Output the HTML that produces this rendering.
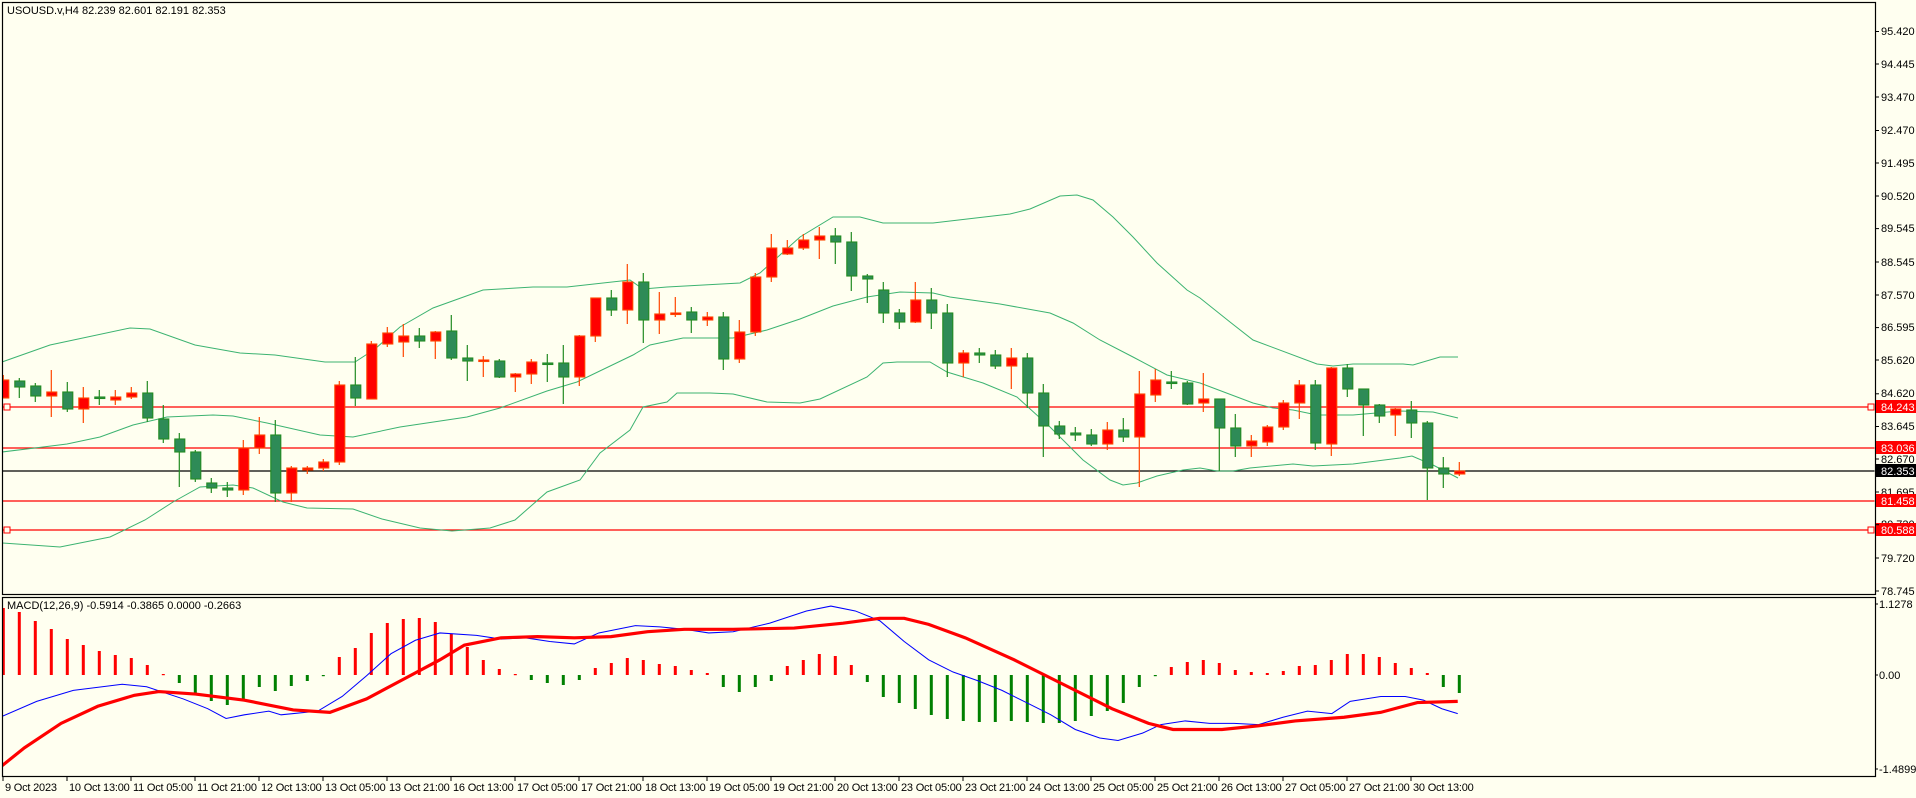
<!DOCTYPE html>
<html><head><meta charset="utf-8"><style>
html,body{margin:0;padding:0;background:#fffff0;width:1916px;height:798px;overflow:hidden}
svg{position:absolute;left:0;top:0}
text{font-family:"Liberation Sans",sans-serif;font-size:11px;fill:#000}
</style></head><body>
<svg id="s" width="1916" height="798" viewBox="0 0 1916 798" xmlns="http://www.w3.org/2000/svg">
<defs>
<clipPath id="cm"><rect x="2.5" y="2.5" width="1872" height="591"/></clipPath>
<clipPath id="cd"><rect x="2.5" y="597.5" width="1872" height="178"/></clipPath>
</defs>
<rect x="0" y="0" width="1916" height="798" fill="#fffff0"/>
<g id="main" clip-path="url(#cm)">
<line x1="2" y1="407" x2="1875" y2="407" stroke="#ff0000" stroke-width="1.3"/>
<line x1="2" y1="448" x2="1875" y2="448" stroke="#ff0000" stroke-width="1.3"/>
<line x1="2" y1="471" x2="1875" y2="471" stroke="#000" stroke-width="1.3"/>
<line x1="2" y1="501" x2="1875" y2="501" stroke="#ff0000" stroke-width="1.3"/>
<line x1="2" y1="530" x2="1875" y2="530" stroke="#ff0000" stroke-width="1.3"/>
<polyline fill="none" stroke="#3cb371" stroke-width="1" points="2,362 50,345 130,328 150,329 195,345 240,353 275,355 325,362 355,362 375,349 400,327 433,308 483,290 533,287 567,287 630,280 643,289 667,287 740,283 760,273 800,237 833,217 860,217 883,223 933,223 1010,214 1030,209 1060,196 1077,195 1093,200 1113,217 1133,237 1157,263 1187,290 1200,298 1230,322 1253,340 1317,364 1333,366 1353,364 1403,364 1413,365 1440,357 1458,357"/>
<polyline fill="none" stroke="#3cb371" stroke-width="1" points="2,452 43,447 67,444 100,437 133,425 167,417 213,415 233,416 267,423 320,435 353,437 400,427 467,417 500,408 547,391 577,382 633,355 650,345 683,338 733,338 767,330 800,319 833,306 867,297 900,292 933,293 950,297 1000,304 1050,313 1073,323 1100,340 1133,357 1167,375 1200,383 1253,403 1273,408 1293,410 1317,415 1353,415 1400,411 1433,412 1458,418"/>
<polyline fill="none" stroke="#3cb371" stroke-width="1" points="2,543 60,547 110,537 145,520 173,502 200,487 233,485 253,488 283,502 307,508 353,509 382,519 420,528 452,531 490,528 515,520 547,492 580,480 600,453 630,430 643,407 667,402 677,393 710,393 733,394 767,402 800,403 820,399 867,377 883,363 897,362 930,362 947,372 983,383 1017,397 1050,427 1083,460 1110,480 1123,485 1137,483 1157,476 1183,470 1200,468 1217,471 1233,471 1250,468 1293,464 1313,466 1353,464 1400,458 1412,456 1433,465 1458,478"/>
<g id="candles"></g>
</g>
<rect x="4" y="404" width="6" height="6" fill="#fffff0" stroke="#ff0000"/>
<rect x="4" y="527" width="6" height="6" fill="#fffff0" stroke="#ff0000"/>
<rect x="1868" y="404" width="6" height="6" fill="#fffff0" stroke="#ff0000"/>
<rect x="1868" y="527" width="6" height="6" fill="#fffff0" stroke="#ff0000"/>
<g id="macd" clip-path="url(#cd)">
<g id="hist"></g>
<g transform="scale(1.2219)">
<polyline fill="none" stroke="#0000ff" stroke-width="0.85" points="0,587 30,574 60,565 100,560 120,562 150,572 170,580 185,588 200,585 220,582 230,585 260,582 280,570 300,553 320,535 340,524 360,518 390,520 410,523 430,522 450,525 470,527 490,518 520,512 540,513 560,515 580,518 600,517 630,510 660,500 680,496 700,500 720,508 740,525 760,540 780,550 800,557 820,565 840,575 860,585 880,597 900,604 915,606 935,600 950,593 970,590 990,592 1010,592 1030,593 1050,587 1070,582 1090,584 1105,574 1130,570 1150,570 1165,573 1180,580 1193,584"/>
<polyline fill="none" stroke="#ff0000" stroke-width="2.6" points="0,628 20,612 50,592 80,578 110,569 130,566 160,568 200,573 240,581 270,583 300,572 330,556 360,540 380,528 410,522 440,521 470,522 500,521 530,517 560,515 600,515 650,514 690,510 720,506 740,506 760,511 790,522 830,540 870,560 910,580 940,592 960,597 1000,597 1030,594 1060,590 1100,587 1130,583 1160,575 1193,574"/>
</g>
</g>
<rect x="2.5" y="2.5" width="1873" height="592" fill="none" stroke="#000" stroke-width="1.2"/>
<rect x="2.5" y="597.5" width="1873" height="179" fill="none" stroke="#000" stroke-width="1.2"/>
<text x="7" y="14">USOUSD.v,H4  82.239 82.601 82.191 82.353</text>
<text x="7" y="609">MACD(12,26,9) -0.5914 -0.3865 0.0000 -0.2663</text>
<g id="ax">
<text x="1881" y="35">95.420</text>
<text x="1881" y="68">94.445</text>
<text x="1881" y="101">93.470</text>
<text x="1881" y="134">92.470</text>
<text x="1881" y="167">91.495</text>
<text x="1881" y="200">90.520</text>
<text x="1881" y="232">89.545</text>
<text x="1881" y="266">88.545</text>
<text x="1881" y="299">87.570</text>
<text x="1881" y="331">86.595</text>
<text x="1881" y="364">85.620</text>
<text x="1881" y="397">84.620</text>
<text x="1881" y="430">83.645</text>
<text x="1881" y="463">82.670</text>
<text x="1881" y="496">81.695</text>
<text x="1881" y="528">80.720</text>
<text x="1881" y="562">79.720</text>
<text x="1881" y="595">78.745</text>
</g>
<rect x="1876" y="400" width="40" height="13" fill="#ff0000"/><text x="1881" y="411" style="fill:#fff">84.243</text>
<rect x="1876" y="441" width="40" height="13" fill="#ff0000"/><text x="1881" y="452" style="fill:#fff">83.036</text>
<rect x="1876" y="464" width="40" height="13" fill="#000"/><text x="1881" y="475" style="fill:#fff">82.353</text>
<rect x="1876" y="494" width="40" height="13" fill="#ff0000"/><text x="1881" y="505" style="fill:#fff">81.458</text>
<rect x="1876" y="523" width="40" height="13" fill="#ff0000"/><text x="1881" y="534" style="fill:#fff">80.588</text>
<text x="1879" y="608">1.1278</text>
<text x="1879" y="679">0.00</text>
<text x="1879" y="773">-1.4899</text>
<g id="dates" style="font-size:11px;letter-spacing:-0.2px">
<text x="5" y="791">9 Oct 2023</text>
<text x="69" y="791">10 Oct 13:00</text>
<text x="133" y="791">11 Oct 05:00</text>
<text x="197" y="791">11 Oct 21:00</text>
<text x="261" y="791">12 Oct 13:00</text>
<text x="325" y="791">13 Oct 05:00</text>
<text x="389" y="791">13 Oct 21:00</text>
<text x="453" y="791">16 Oct 13:00</text>
<text x="517" y="791">17 Oct 05:00</text>
<text x="581" y="791">17 Oct 21:00</text>
<text x="645" y="791">18 Oct 13:00</text>
<text x="709" y="791">19 Oct 05:00</text>
<text x="773" y="791">19 Oct 21:00</text>
<text x="837" y="791">20 Oct 13:00</text>
<text x="901" y="791">23 Oct 05:00</text>
<text x="965" y="791">23 Oct 21:00</text>
<text x="1029" y="791">24 Oct 13:00</text>
<text x="1093" y="791">25 Oct 05:00</text>
<text x="1157" y="791">25 Oct 21:00</text>
<text x="1221" y="791">26 Oct 13:00</text>
<text x="1285" y="791">27 Oct 05:00</text>
<text x="1349" y="791">27 Oct 21:00</text>
<text x="1413" y="791">30 Oct 13:00</text>
</g>
<g id="ticks"></g>
</svg>
<script>
var NS="http://www.w3.org/2000/svg";
function el(p,t,a){var e=document.createElementNS(NS,t);for(var k in a)e.setAttribute(k,a[k]);p.appendChild(e);return e;}
var C=[
"r 380 398 375 398","g 381 387 378 398","g 386 396 383 402","r 392 396 370 417","g 392 409 382 412","r 398 409 387 423","g 397 398 390 405","r 397 400 390 405","r 393 397 387 399","g 393 418 381 422",
"g 419 439 405 443","g 439 452 433 487","g 452 479 450 482","g 483 488 478 493","g 488 490 482 497","r 448 490 440 495","r 435 448 417 454","g 435 493 420 502","r 468 493 466 502","r 468 470 466 474",
"r 462 468 459 471","r 385 462 381 465","g 385 398 357 406","r 344 399 341 399","r 333 344 327 347","r 336 342 324 357","g 336 341 328 348","r 332 341 331 359","g 331 358 315 360","g 358 361 345 381",
"r 360 361 356 377","g 361 377 359 378","r 374 377 373 392","r 362 374 359 384","g 363 364 354 382","g 363 377 345 404","r 336 377 335 386","r 298 336 298 342","g 298 310 290 316","r 282 310 264 324",
"g 282 320 273 343","r 314 320 292 334","r 313 314 297 317","g 312 320 307 333","r 317 320 312 326","g 317 359 312 370","r 332 359 320 363","r 277 332 273 336","r 248 277 234 282","r 248 254 240 255",
"r 240 248 234 250","r 236 240 227 259","g 236 242 228 264","g 242 276 232 291","g 276 279 274 303","g 290 313 282 323","g 313 322 309 329","r 300 322 282 323","g 300 313 288 329","g 313 363 304 377",
"r 353 363 350 377","g 353 355 348 363","g 355 366 350 369","r 358 366 348 389","g 358 393 353 408","g 393 426 384 457","g 426 434 421 439","g 433 435 427 441","g 435 444 429 446","r 430 444 422 450",
"g 430 437 418 442","r 394 437 371 487","r 380 395 369 402","g 382 383 371 389","g 383 404 381 405","r 399 403 373 412","g 399 428 399 471","g 428 446 414 457","r 441 446 435 457","r 427 442 425 446",
"r 403 427 400 430","r 385 403 380 419","g 385 443 380 450","r 368 444 367 456","g 368 389 364 397","g 389 405 389 436","g 405 416 404 423","r 409 415 408 436","g 410 423 401 438","g 423 468 421 500",
"g 468 474 457 488","r 471 474 462 476"];
var cg=document.getElementById("candles");
C.forEach(function(s,i){var p=s.split(" ");var c=3.3+16*i;var red=p[0]=="r";
var bt=+p[1],bb=+p[2],wt=+p[3],wb=+p[4];
var st=red?"#ff4500":"#228b22",fl=red?"#ff0000":"#2e8b57";
el(cg,"line",{x1:c,x2:c,y1:wt,y2:wb,stroke:st,"stroke-width":1.2});
var h=Math.max(bb-bt,1.5);
el(cg,"rect",{x:c-4.5,y:bt,width:10,height:h,fill:fl,stroke:st,"stroke-width":1.1});
});
var H=[608,612,621,629,639,645,651,655,658,665,674,683,693,701,705,699,687,691,686,681,676,657,648,633,623,
619,618,622,634,647,660,669,674,680,683,685,680,668,663,658,660,664,666,670,673,687,692,687,681,666,660,654,656,665,682,
697,703,709,715,719,721,722,722,721,722,723,723,721,716,711,703,687,676,667,662,660,663,670,672,673,671,666,665,660,654,654,657,663,668,673,687,693];
var hg=document.getElementById("hist");
H.forEach(function(y,i){var c=3.3+16*i;var neg=y>675;
var h=Math.max(Math.abs(y-675),1.2);
el(hg,"rect",{x:c-1.5,y:neg?675:y,width:3,height:h,fill:neg?"#008000":"#ff0000"});});
var tg=document.getElementById("ticks");
for(var k=0;k<23;k++){var x=3+64*k;el(tg,"line",{x1:x,x2:x,y1:776,y2:781,stroke:"#000"});}
var ys=[31.5,64,97,130.5,163,196,228.6,262,295,327.6,360,393.8,426.5,459,492,524.7,558,591];
ys.forEach(function(y){el(tg,"line",{x1:1875,x2:1879,y1:y,y2:y,stroke:"#000"});});
[604,675,769].forEach(function(y){el(tg,"line",{x1:1875,x2:1878,y1:y,y2:y,stroke:"#000"});});
</script>
</body></html>
